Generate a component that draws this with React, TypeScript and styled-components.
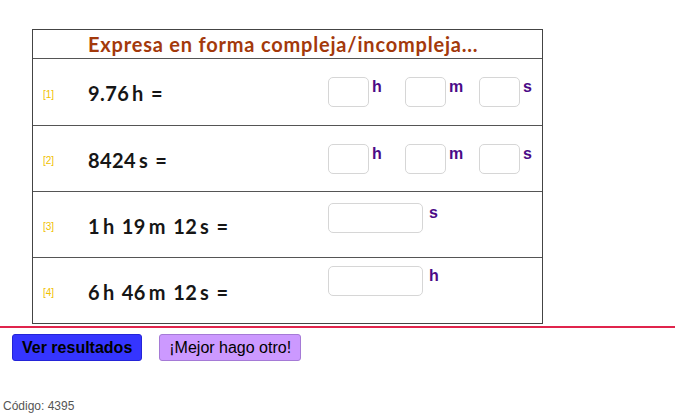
import React from "react";
import styled, { createGlobalStyle } from "styled-components";

type Exercise = {
  expression: string;
  units: Array<string>;
  wide: boolean;
  lift: number;
};

const exercises: Array<Exercise> = [
  { expression: "9.76\u2009h =", units: ["h", "m", "s"], wide: false, lift: 0 },
  { expression: "8424\u2009s =", units: ["h", "m", "s"], wide: false, lift: 0 },
  { expression: "1\u2009h 19\u2009m 12\u2009s =", units: ["s"], wide: true, lift: 14 },
  { expression: "6\u2009h 46\u2009m 12\u2009s =", units: ["h"], wide: true, lift: 20 },
];

const fieldWidths = [77, 74, 60];

const GlobalStyle = createGlobalStyle`
  body {
    margin: 0;
    background: #fff;
    font-family: "Liberation Sans", Arial, sans-serif;
  }
`;

const Page = styled.div`
  width: 675px;
  height: 417px;
  padding-top: 29px;
  box-sizing: border-box;
  display: flex;
  flex-direction: column;
`;

const Table = styled.div`
  margin-left: 32px;
  width: 511px;
  box-sizing: border-box;
  border: 1px solid #444;
`;

const Header = styled.div`
  height: 28px;
  padding-left: 55px;
  display: flex;
  align-items: center;
  border-bottom: 1px solid #555;
  color: #a3390b;
  font-family: Lato, "Open Sans", sans-serif;
  font-size: 20px;
  font-weight: bold;
  letter-spacing: 0.8px;
`;

const Row = styled.div<{ $first: boolean }>`
  height: ${(p) => (p.$first ? 66 : 65)}px;
  display: grid;
  grid-template-columns: 55px 240px 1fr;
  align-items: center;
  border-top: ${(p) => (p.$first ? "none" : "1px solid #555")};
`;

const Index = styled.span`
  padding-left: 10px;
  padding-top: 4px;
  color: #f0c000;
  font-size: 10px;
`;

const Expression = styled.span`
  padding-top: 2px;
  color: #161616;
  font-family: Lato, "Open Sans", sans-serif;
  font-size: 20px;
  font-weight: bold;
  letter-spacing: 0.4px;
  word-spacing: 2px;
  white-space: pre;
`;

const Answers = styled.div<{ $lift: number }>`
  display: flex;
  align-items: flex-start;
  margin-bottom: ${(p) => p.$lift}px;
`;

const Field = styled.div`
  display: flex;
  align-items: flex-start;
`;

const Box = styled.input<{ $wide: boolean }>`
  width: ${(p) => (p.$wide ? 95 : 41)}px;
  height: 30px;
  box-sizing: border-box;
  margin: 0;
  border: 1px solid #d6d6d6;
  border-radius: 5px;
  background: #fff;
  outline: none;
`;

const Unit = styled.span<{ $wide: boolean }>`
  margin-left: ${(p) => (p.$wide ? 6 : 3)}px;
  margin-top: 1px;
  color: #4b0a87;
  font-size: 16px;
  font-weight: bold;
`;

const Divider = styled.div`
  margin-top: 2px;
  height: 2px;
  background: #e0244c;
`;

const Buttons = styled.div`
  display: flex;
  gap: 17px;
  padding: 6px 0 0 12px;
`;

const Button = styled.button<{ $primary: boolean }>`
  height: 27px;
  padding: 0 ${(p) => (p.$primary ? 9 : 9)}px;
  border-radius: 3px;
  border: 1px solid ${(p) => (p.$primary ? "#2424d8" : "#a57ad6")};
  background: ${(p) => (p.$primary ? "#3535ff" : "#cc99ff")};
  color: #000;
  font-family: "Liberation Sans", Arial, sans-serif;
  font-size: 16px;
  font-weight: ${(p) => (p.$primary ? "bold" : "normal")};
`;

const Code = styled.div`
  margin-top: auto;
  padding: 0 0 4px 3px;
  color: #555;
  font-size: 12px;
`;

const App = (): JSX.Element => {
  return (
    <>
      <GlobalStyle />
      <Page>
        <Table>
          <Header>Expresa en forma compleja/incompleja...</Header>
          {exercises.map((exercise: Exercise, i: number) => (
            <Row $first={i === 0} key={exercise.expression}>
              <Index>[{i + 1}]</Index>
              <Expression>{exercise.expression}</Expression>
              <Answers $lift={exercise.lift}>
                {exercise.units.map((unit: string, j: number) => (
                  <Field
                    key={unit}
                    style={exercise.wide ? undefined : { width: fieldWidths[j] }}
                  >
                    <Box $wide={exercise.wide} />
                    <Unit $wide={exercise.wide}>{unit}</Unit>
                  </Field>
                ))}
              </Answers>
            </Row>
          ))}
        </Table>
        <Divider />
        <Buttons>
          <Button $primary>Ver resultados</Button>
          <Button $primary={false}>¡Mejor hago otro!</Button>
        </Buttons>
        <Code>Código: 4395</Code>
      </Page>
    </>
  );
};

export default App;
